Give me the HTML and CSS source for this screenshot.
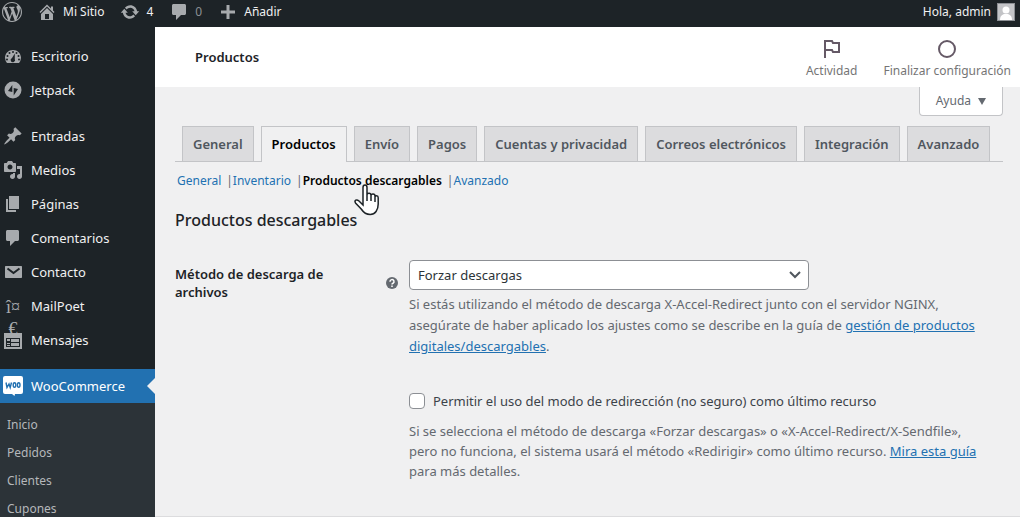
FILE: index.html
```html
<!DOCTYPE html>
<html lang="es">
<head>
    <meta charset="UTF-8">
    <meta name="viewport" content="width=device-width, initial-scale=1.0">
    <title>Productos descargables - Mi Sitio</title>
    <link rel="stylesheet" href="styles.css">
</head>
<body>
<header class="adminbar">
    <a href="#" class="bar-logo" aria-label="WordPress">
        <svg class="icon" viewBox="0 0 20 20"><path d="M20 10c0-5.51-4.49-10-10-10C4.48 0 0 4.49 0 10c0 5.52 4.48 10 10 10 5.51 0 10-4.48 10-10zM7.78 15.37L4.37 6.22c.55-.02 1.17-.08 1.17-.08.5-.06.44-1.13-.06-1.11 0 0-1.45.11-2.37.11-.18 0-.37 0-.58-.01C4.12 2.69 6.87 1.11 10 1.11c2.33 0 4.45.87 6.05 2.34-.68-.11-1.65.39-1.65 1.58 0 .74.45 1.36.9 2.1.35.61.55 1.36.55 2.46 0 1.49-1.4 5-1.4 5l-3.03-8.37c.54-.02.82-.17.82-.17.5-.05.44-1.25-.06-1.22 0 0-1.44.12-2.38.12-.87 0-2.33-.12-2.33-.12-.5-.03-.56 1.2-.06 1.22l.92.08 1.26 3.41zM17.41 10c.24-.64.74-1.87.43-4.25.7 1.29 1.05 2.71 1.05 4.25 0 3.29-1.73 6.24-4.4 7.78.97-2.59 1.94-5.2 2.92-7.78zM6.1 18.09C3.12 16.65 1.11 13.53 1.11 10c0-1.3.23-2.48.72-3.59C3.25 10.3 4.67 14.2 6.1 18.09zm4.03-6.63l2.58 6.98c-.86.29-1.76.45-2.71.45-.79 0-1.57-.11-2.29-.33.81-2.38 1.62-4.74 2.42-7.1z"/></svg>
    </a>
    <a href="#" class="bar-item">
        <svg class="icon" viewBox="0 0 20 20"><path d="M16 8.5l1.53 1.53-1.06 1.06L10 4.6l-6.47 6.49-1.06-1.06L10 2.5l4 4v-2h2v4zm-6-2.46l6 5.99V18H4v-5.97zM12 17v-5H8v5h4z"/></svg>
        Mi Sitio
    </a>
    <a href="#" class="bar-item">
        <svg class="icon" viewBox="0 0 20 20"><path d="M10.2 3.28c3.53 0 6.43 2.61 6.92 6h2.08l-3.5 4-3.5-4h2.32c-.45-1.97-2.21-3.45-4.32-3.45-1.45 0-2.73.71-3.54 1.78L4.95 5.66C6.23 4.2 8.11 3.28 10.2 3.28zm-.4 13.44c-3.52 0-6.43-2.61-6.92-6H.8l3.5-4c1.17 1.33 2.33 2.67 3.5 4H5.48c.45 1.97 2.21 3.45 4.32 3.45 1.45 0 2.73-.71 3.54-1.78l1.71 1.95c-1.28 1.46-3.15 2.38-5.25 2.38z"/></svg>
        4
    </a>
    <a href="#" class="bar-item muted">
        <svg class="icon" viewBox="0 0 20 20"><path d="M4.500 2h11c.8 0 1.500.7 1.500 1.500v8c0 .8-.7 1.500-1.500 1.500H12l-5 5v-5H4.500C3.700 13 3 12.300 3 11.500v-8C3 2.700 3.700 2 4.500 2z"/></svg>
        0
    </a>
    <a href="#" class="bar-item">
        <svg class="icon" viewBox="0 0 20 20"><path d="M17 8.500v3h-5.500V17h-3v-5.500H3v-3h5.500V3h3v5.500z"/></svg>
        Añadir
    </a>
    <a href="#" class="bar-account">
        Hola, admin
        <svg class="avatar" viewBox="0 0 18 18"><rect x="0.500" y="0.500" width="17" height="17" fill="#c3c4c7" stroke="#8c8f94"/><circle cx="9" cy="7" r="3.500" fill="#fff"/><path d="M3 17c0-3 1-5 4-6h4c3 1 4 3 4 6z" fill="#fff"/></svg>
    </a>
</header>

<div class="layout">
    <nav class="sidebar">
        <ul class="menu">
            <li><a href="#"><svg class="icon" viewBox="0 0 20 20"><path fill-rule="evenodd" d="M4 17a9 9 0 0 1-2-5.200C2 7.300 5.600 4 10 4s8 3.300 8 7.800A9 9 0 0 1 16 17zM10 5a1 1 0 1 0 0 2 1 1 0 0 0 0-2zM6.500 6a1 1 0 1 0 0 2 1 1 0 0 0 0-2zM13.500 6a1 1 0 1 0 0 2 1 1 0 0 0 0-2zM4.500 9a1 1 0 1 0 0 2 1 1 0 0 0 0-2zM15.500 9a1 1 0 1 0 0 2 1 1 0 0 0 0-2zM4 12.500a1 1 0 1 0 0 2 1 1 0 0 0 0-2zM16 12.500a1 1 0 1 0 0 2 1 1 0 0 0 0-2zM11.800 7.500L9 12a2.200 2.200 0 1 0 2.800 1z"/></svg>Escritorio</a></li>
            <li><a href="#"><svg class="icon" viewBox="0 0 20 20"><path fill-rule="evenodd" d="M10 1.500a8.500 8.500 0 1 0 0 17 8.500 8.500 0 0 0 0-17zM9.300 5v7L5 10.900zM10.700 15.500V8l4.300 1.100z"/></svg>Jetpack</a></li>
        </ul>
        <ul class="menu">
            <li><a href="#"><svg class="icon" viewBox="0 0 20 20"><path d="M10.440 3.020l1.820-1.820 6.360 6.350-1.830 1.820c-1.050-.68-2.480-.57-3.410.36l-.75.75c-.92.93-1.040 2.350-.35 3.410l-1.830 1.820-2.410-2.410-2.800 2.790c-.42.42-3.380 2.710-3.800 2.290s1.860-3.390 2.280-3.810l2.790-2.790L4.100 9.360l1.830-1.820c1.050.69 2.480.57 3.400-.36l.75-.75c.93-.92 1.050-2.350.36-3.410z"/></svg>Entradas</a></li>
            <li><a href="#"><svg class="icon" viewBox="0 0 20 20"><path d="M13 11V4c0-.55-.45-1-1-1h-1.670L9 1H5L3.670 3H2c-.55 0-1 .45-1 1v7c0 .55.45 1 1 1h10c.55 0 1-.45 1-1zM7 4.500c1.380 0 2.500 1.120 2.500 2.500S8.380 9.500 7 9.500 4.500 8.380 4.500 7 5.620 4.500 7 4.500zM14 6h5v10.500c0 1.380-1.120 2.500-2.500 2.500S14 17.880 14 16.500s1.120-2.500 2.500-2.500c.17 0 .34.02.5.05V9h-3V6zm-4 8.050V13h2v3.500c0 1.380-1.120 2.500-2.500 2.500S7 17.880 7 16.500 8.120 14 9.500 14c.17 0 .34.02.5.05z"/></svg>Medios</a></li>
            <li><a href="#"><svg class="icon" viewBox="0 0 20 20"><path d="M6 15V2h10v13H6zm-1 1h8v2H3V5h2v11z"/></svg>Páginas</a></li>
            <li><a href="#"><svg class="icon" viewBox="0 0 20 20"><path d="M4.500 2h10c.8 0 1.500.7 1.500 1.500v8c0 .8-.7 1.500-1.500 1.500H12l-5 5v-5H4.500C3.700 13 3 12.300 3 11.500v-8C3 2.700 3.700 2 4.500 2z"/></svg>Comentarios</a></li>
            <li><a href="#"><svg class="icon" viewBox="0 0 20 20"><path d="M3 4h15c.6 0 1 .4 1 1v10c0 .6-.4 1-1 1H3c-.6 0-1-.4-1-1V5c0-.6.4-1 1-1z"/><path class="envelope-fold" d="M4.500 6.500l6 4.500 6-4.500"/></svg>Contacto</a></li>
            <li><a href="#"><span class="icon glyph-icon" aria-hidden="true">î¤ €</span>MailPoet</a></li>
            <li><a href="#"><svg class="icon" viewBox="0 0 20 20"><path fill-rule="evenodd" d="M1 3h18v16H1zM3 8v9h14V8zM4 9h3v2H4zM8 9h8v3H8zM4 13h3v1H4zM8 13h8v3H8zM4 15h3v1H4z"/></svg>Mensajes</a></li>
        </ul>
        <ul class="menu">
            <li class="current">
                <a href="#"><svg class="icon" viewBox="0 0 20 20"><path d="M2 0h16a2 2 0 0 1 2 2v14a2 2 0 0 1-2 2h-6l-.5 2L9 18H2a2 2 0 0 1-2-2V2a2 2 0 0 1 2-2z"/><path class="woo-mark" d="M3 6.500l1 5 2-3.500 1.200 3.500 1.300-5"/><ellipse class="woo-mark" cx="11.500" cy="9" rx="1.300" ry="2.200"/><ellipse class="woo-mark" cx="15.700" cy="9" rx="1.300" ry="2.200"/></svg>WooCommerce</a>
            </li>
        </ul>
        <ul class="submenu">
            <li><a href="#">Inicio</a></li>
            <li><a href="#">Pedidos</a></li>
            <li><a href="#">Clientes</a></li>
            <li><a href="#">Cupones</a></li>
        </ul>
    </nav>

    <main class="main">
        <div class="page-header">
            <h1>Productos</h1>
            <div class="activity">
                <button type="button">
                    <svg viewBox="0 0 24 24"><path d="M5 21V4h7l1 2h6v9h-6l-1-2H5"/></svg>
                    Actividad
                </button>
                <button type="button">
                    <svg viewBox="0 0 24 24"><circle cx="12" cy="12" r="8"/></svg>
                    Finalizar configuración
                </button>
            </div>
        </div>

        <div class="content">
            <div class="screen-meta">
                <button type="button" class="help-toggle">Ayuda <svg viewBox="0 0 8 7"><path d="M0 0h8L4 7z"/></svg></button>
            </div>

            <nav class="tabs">
                <a href="#">General</a>
                <a href="#" class="active">Productos</a>
                <a href="#">Envío</a>
                <a href="#">Pagos</a>
                <a href="#">Cuentas y privacidad</a>
                <a href="#">Correos electrónicos</a>
                <a href="#">Integración</a>
                <a href="#">Avanzado</a>
            </nav>

            <ul class="sections">
                <li><a href="#">General</a></li>
                <li><a href="#">Inventario</a></li>
                <li><a href="#" class="active">Productos descargables</a></li>
                <li><a href="#">Avanzado</a></li>
            </ul>

            <h2>Productos descargables</h2>

            <form class="settings">
                <div class="row">
                    <div class="row-head">
                        <label for="download-method">Método de descarga de archivos</label>
                        <svg class="tip" viewBox="0 0 12 12"><circle cx="6" cy="6" r="6"/><path d="M4 4.700a2 2 0 1 1 3 1.600Q6 6.700 6 7.500M6 8.600v1.400"/></svg>
                    </div>
                    <div class="field">
                        <div class="select">
                            <select id="download-method">
                                <option>Forzar descargas</option>
                            </select>
                            <svg viewBox="0 0 12 8"><path d="M1 1l5 5 5-5"/></svg>
                        </div>
                        <p class="description">Si estás utilizando el método de descarga X-Accel-Redirect junto con el servidor NGINX, asegúrate de haber aplicado los ajustes como se describe en la guía de <a href="#">gestión de productos digitales/descargables</a>.</p>
                    </div>
                </div>
                <div class="row">
                    <div class="row-head"></div>
                    <div class="field">
                        <label class="check" for="redirect-fallback">
                            <input type="checkbox" id="redirect-fallback">
                            Permitir el uso del modo de redirección (no seguro) como último recurso
                        </label>
                        <p class="description compact">Si se selecciona el método de descarga «Forzar descargas» o «X-Accel-Redirect/X-Sendfile», pero no funciona, el sistema usará el método «Redirigir» como último recurso. <a href="#">Mira esta guía</a> para más detalles.</p>
                    </div>
                </div>
            </form>
        </div>
    </main>
</div>

<svg class="pointer" viewBox="0 0 26 32"><path d="M10 19V3.500C10 .3 14 .3 14 3.500V12v-1c0-2.500 4-2.500 4 .2V13v-1.200c0-2.300 4-2.300 4 .3V14v-.7c0-2 3.200-2 3.200.5V20c0 6-3 10.500-8 10.500-5 0-7-2.500-9-5.500L2.500 19C1 16.300 3.500 14.800 6 17l4 4z"/><path d="M14 12v5M18 13v4M22 14v4"/></svg>
</body>
</html>
```
FILE: styles.css
```css
* {
    box-sizing: border-box;
}
body {
    margin: 0;
    height: 100vh;
    overflow: hidden;
    display: flex;
    flex-direction: column;
    font-family: "Noto Sans", "Open Sans", sans-serif;
    font-size: 13px;
    line-height: 18px;
    color: #3c434a;
    background: #f0f0f1;
}
ul {
    list-style: none;
    margin: 0;
    padding: 0;
}
a {
    color: #2271b1;
}
button {
    font: inherit;
    border: none;
    background: none;
    cursor: pointer;
}
.icon {
    width: 20px;
    height: 20px;
    flex: none;
    fill: #a7aaad;
}

/* top bar */
.adminbar {
    display: flex;
    align-items: center;
    flex: none;
    gap: 15px;
    height: 27px;
    padding: 0 5px 4px 2px;
    background: #1d2327;
    font-size: 12px;
}
.adminbar a {
    display: flex;
    align-items: center;
    gap: 6px;
    color: #f0f0f1;
    text-decoration: none;
}
.adminbar .bar-item {
    margin-right: 1px;
}
.adminbar .muted {
    color: #8c8f94;
}
.adminbar .bar-account {
    margin-left: auto;
}
.avatar {
    width: 18px;
    height: 18px;
}

/* side menu */
.layout {
    display: flex;
    flex: 1;
    min-height: 0;
}
.sidebar {
    flex: none;
    width: 155px;
    overflow: hidden;
    background: #1d2327;
}
.menu {
    padding-top: 12px;
}
.menu a {
    display: flex;
    align-items: center;
    gap: 8px;
    height: 34px;
    padding-left: 3px;
    color: #f0f0f1;
    text-decoration: none;
}
.menu .current {
    position: relative;
    background: #2271b1;
}
.menu .current a {
    color: #fff;
}
.menu .current::after {
    content: "";
    position: absolute;
    right: 0;
    top: 9px;
    border: 8px solid transparent;
    border-left: none;
    border-right-color: #f0f0f1;
}
.current .icon {
    fill: #fff;
}
.woo-mark {
    fill: none;
    stroke: #2271b1;
    stroke-width: 1.4;
}
.envelope-fold {
    fill: none;
    stroke: #1d2327;
    stroke-width: 2;
}
.glyph-icon {
    font-family: "Liberation Serif", serif;
    font-size: 18px;
    line-height: 22px;
    text-align: center;
    color: #a7aaad;
}
.submenu {
    padding: 8px 0;
    background: #2c3338;
    font-size: 12px;
}
.submenu a {
    display: block;
    padding: 5px 7px;
    color: #b5b8bb;
    text-decoration: none;
}

/* page header */
.main {
    flex: 1;
    min-width: 0;
    overflow: hidden;
    border-bottom: 1px solid #dcdcde;
}
.page-header {
    display: flex;
    align-items: center;
    justify-content: space-between;
    height: 60px;
    padding: 0 9px 0 40px;
    background: #fff;
}
.page-header h1 {
    margin: 0;
    font-size: 13px;
    font-weight: 600;
    color: #1d2327;
}
.activity {
    display: flex;
    gap: 26px;
}
.activity button {
    display: flex;
    flex-direction: column;
    align-items: center;
    gap: 1px;
    padding: 2px 0 0;
    font-size: 12px;
    color: #757575;
}
.activity svg {
    width: 24px;
    height: 24px;
    fill: none;
    stroke: #655966;
    stroke-width: 2;
}

/* content */
.content {
    padding: 0 17px 0 20px;
}
.screen-meta {
    display: flex;
    justify-content: flex-end;
}
.help-toggle {
    display: flex;
    align-items: center;
    gap: 7px;
    height: 29px;
    padding: 0 16px;
    border: 1px solid #c3c4c7;
    border-top: none;
    border-radius: 0 0 4px 4px;
    background: #fff;
    font-size: 12px;
    color: #646970;
}
.help-toggle svg {
    width: 8px;
    height: 7px;
    fill: #646970;
}
.tabs {
    display: flex;
    gap: 7px;
    margin-top: 10px;
    padding-left: 7px;
    border-bottom: 1px solid #c3c4c7;
}
.tabs a {
    height: 35px;
    padding: 8px 10px;
    border: 1px solid #c3c4c7;
    border-bottom: none;
    background: #dcdcde;
    color: #50575e;
    font-weight: 600;
    text-decoration: none;
    white-space: nowrap;
}
.tabs .active {
    height: 36px;
    margin-bottom: -1px;
    background: #f0f0f1;
    color: #000;
}
.sections {
    display: flex;
    margin: 10px 2px 0;
    font-size: 12px;
}
.sections li + li::before {
    content: "|";
    margin-left: 5px;
    color: #646970;
}
.sections a {
    text-decoration: none;
}
.sections .active {
    font-weight: 600;
    color: #000;
}
h2 {
    margin: 19px 0 0;
    font-size: 16px;
    font-weight: 500;
    line-height: 22px;
    color: #1d2327;
}
.settings {
    margin-top: 29px;
}
.row {
    display: flex;
    gap: 11px;
    margin-bottom: 35px;
}
.row-head {
    display: flex;
    align-items: flex-start;
    justify-content: space-between;
    flex: none;
    width: 223px;
    padding-top: 5px;
    color: #1d2327;
    font-weight: 600;
}
.row-head label {
    max-width: 170px;
}
.tip {
    width: 12px;
    height: 12px;
    margin-top: 12px;
    fill: #646970;
}
.tip path {
    fill: none;
    stroke: #fff;
    stroke-width: 1.5;
}
.field {
    flex: 1;
}
.select {
    position: relative;
    max-width: 400px;
}
.select select {
    width: 100%;
    height: 30px;
    padding: 0 24px 0 8px;
    border: 1px solid #8c8f94;
    border-radius: 4px;
    background: #fff;
    color: #2c3338;
    font: inherit;
    appearance: none;
}
.select svg {
    position: absolute;
    right: 8px;
    top: 11px;
    width: 12px;
    height: 8px;
    fill: none;
    stroke: #50575e;
    stroke-width: 2;
    pointer-events: none;
}
.description {
    max-width: 580px;
    margin: 4px 0 0;
    line-height: 21px;
    color: #646970;
}
.description.compact {
    margin-top: 11px;
    line-height: 20px;
}
.check {
    display: flex;
    align-items: center;
    gap: 8px;
}
.check input {
    width: 16px;
    height: 16px;
    margin: 0;
    border: 1px solid #8c8f94;
    border-radius: 4px;
    background: #fff;
    appearance: none;
}

/* hand cursor over the section links */
.pointer {
    position: absolute;
    left: 353px;
    top: 184px;
    width: 26px;
    height: 32px;
    fill: #fff;
    stroke: #1d2327;
    stroke-width: 1.5;
}
```
